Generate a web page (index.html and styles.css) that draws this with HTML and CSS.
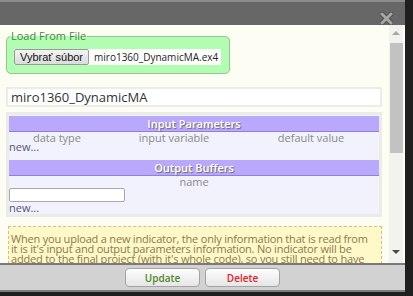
FILE: index.html
```html
<!DOCTYPE html>
<html lang="sk">
<head>
    <meta charset="UTF-8">
    <title>Indicator</title>
    <link rel="stylesheet" href="styles.css">
</head>
<body>
    <div class="dialog">
        <div class="titlebar">
            <span class="close">
                <svg width="13" height="13" viewBox="0 0 13 13">
                    <path d="M2 2 L11 11 M11 2 L2 11" stroke="#505050" stroke-width="5" stroke-linecap="round"/>
                    <path d="M2 2 L11 11 M11 2 L2 11" stroke="#a6a6a6" stroke-width="3" stroke-linecap="round"/>
                </svg>
            </span>
        </div>
        <div class="body">
            <div class="content">
                <fieldset class="loadfile">
                    <legend>Load From File</legend>
                    <div class="file">
                        <span class="file-btn">Vybrať súbor</span>
                        <span class="file-name">miro1360_DynamicMA.ex4</span>
                    </div>
                </fieldset>

                <div class="name-input">miro1360_DynamicMA</div>

                <div class="params">
                    <div class="head">Input Parameters</div>
                    <div class="cols three">
                        <span>data type</span>
                        <span>input variable</span>
                        <span>default value</span>
                    </div>
                    <a class="new">new...</a>

                    <div class="head second">Output Buffers</div>
                    <div class="cols">
                        <span>name</span>
                    </div>
                    <div class="buf-input"></div>
                    <a class="new">new...</a>
                </div>

                <div class="note">
                    When you upload a new indicator, the only information that is read from
                    it is it's input and output parameters information. No indicator will be
                    added to the final project (with it's whole code), so you still need to have
                    it in your terminal.
                </div>
            </div>
            <div class="scrollbar">
                <span class="arrow up"></span>
                <span class="thumb"></span>
                <span class="arrow down"></span>
            </div>
        </div>
        <div class="footer">
            <button class="btn update">Update</button>
            <button class="btn delete">Delete</button>
        </div>
    </div>
</body>
</html>
```

FILE: styles.css
```css
html, body {
    margin: 0;
    padding: 0;
    background: #1f1f1f;
}
body {
    width: 413px;
    height: 296px;
    overflow: hidden;
    font-family: "Open Sans", "Liberation Sans", sans-serif;
}
.dialog {
    width: 405px;
    height: 292px;
    display: flex;
    flex-direction: column;
    background: #fdfdf3;
}
.titlebar {
    height: 23px;
    border-top: 2px solid #8c8c8c;
    background: #676767;
    display: flex;
    justify-content: flex-end;
    align-items: center;
    padding-right: 12px;
}
.close {
    display: block;
    height: 13px;
    margin-top: 1px;
}
.body {
    flex: 1;
    display: flex;
    overflow: hidden;
}
.content {
    width: 376px;
    padding: 4px 7px 0 6px;
    overflow: hidden;
}
.scrollbar {
    width: 14px;
    background: #f2f2ee;
    display: flex;
    flex-direction: column;
    align-items: center;
    padding-top: 6px;
}
.arrow {
    width: 0;
    height: 0;
    border-left: 4px solid transparent;
    border-right: 4px solid transparent;
}
.arrow.up {
    border-bottom: 4px solid #a8a8a8;
}
.arrow.down {
    border-top: 4px solid #4a4a4a;
    margin-top: 97px;
}
.thumb {
    width: 13px;
    height: 110px;
    margin-top: 8px;
    background: #c2c2c2;
}

/* load from file */
.loadfile {
    margin: 0;
    width: 208px;
    padding: 6px 7px 8px;
    background: #b3fdb3;
    border: 1px solid #93c693;
    border-radius: 5px;
}
.loadfile legend {
    padding: 0 1px;
    margin-left: -4px;
    font-size: 11px;
    line-height: 14px;
    color: #4a844a;
}
.file {
    display: flex;
    height: 16px;
    background: #fff;
    width: 207px;
    white-space: nowrap;
}
.file-btn {
    font-family: "Liberation Sans", Arial, sans-serif;
    font-size: 11px;
    line-height: 14px;
    color: #111;
    padding: 0 5px;
    border: 1px solid #9a9a9a;
    border-radius: 2px;
    background: linear-gradient(#f4f4f4, #dcdcdc);
}
.file-name {
    font-size: 10px;
    line-height: 16px;
    color: #222;
    padding-left: 5px;
}

/* name */
.name-input {
    margin-top: 13px;
    height: 16px;
    border: 2px solid #ececea;
    background: #fff;
    font-size: 13px;
    line-height: 16px;
    color: #333;
    padding-left: 3px;
}

/* parameters */
.params {
    margin-top: 5px;
    width: 370px;
    padding: 1px 0 0;
    border: 3px solid #ebebe8;
    background: #f2f2fd;
}
.head {
    height: 15px;
    border-bottom: 1px solid #8f7fdc;
    background: #b9a8fb;
    color: #fff;
    font-size: 11px;
    font-weight: 600;
    line-height: 15px;
    text-align: center;
    text-shadow: 1px 1px 1px #6a6a6a;
}
.head.second {
    margin-top: 9px;
}
.cols {
    display: grid;
    grid-template-columns: 1fr;
    font-size: 11px;
    line-height: 11px;
    color: #8a8a8a;
    text-align: center;
}
.cols.three {
    grid-template-columns: 96px 138px 136px;
}
.new {
    display: block;
    font-size: 11px;
    line-height: 8px;
    color: #55557a;
}
.buf-input {
    margin-top: 1px;
    width: 114px;
    height: 12px;
    border: 1px solid #a8a8a8;
    border-radius: 2px;
    background: #fff;
}
.params .buf-input + .new {
    line-height: 11px;
    padding-bottom: 1px;
}

/* note */
.note {
    margin-top: 9px;
    margin-left: 2px;
    padding: 7px 10px 4px 2px;
    border: 1px dashed #e0b888;
    background: #fff8c8;
    color: #8c7a4a;
    font-size: 11px;
    line-height: 10px;
    letter-spacing: -0.2px;
}

/* footer */
.footer {
    border-top: 2px solid #7a7a7a;
    border-bottom: 2px solid #7e7e7e;
    background: #d2d2d2;
    display: flex;
    justify-content: center;
    align-items: flex-start;
    gap: 5px;
    padding-top: 3px;
    box-sizing: border-box;
    height: 29px;
}
.btn {
    width: 75px;
    height: 19px;
    padding: 0;
    border: 1px solid #a3a3a3;
    border-radius: 4px;
    background: linear-gradient(#fdfdfd, #e6e6e6);
    font-family: "Open Sans", "Liberation Sans", sans-serif;
    font-size: 10px;
    font-weight: 600;
}
.btn.update { color: #4a8a22; }
.btn.delete { color: #e8202a; }
```
